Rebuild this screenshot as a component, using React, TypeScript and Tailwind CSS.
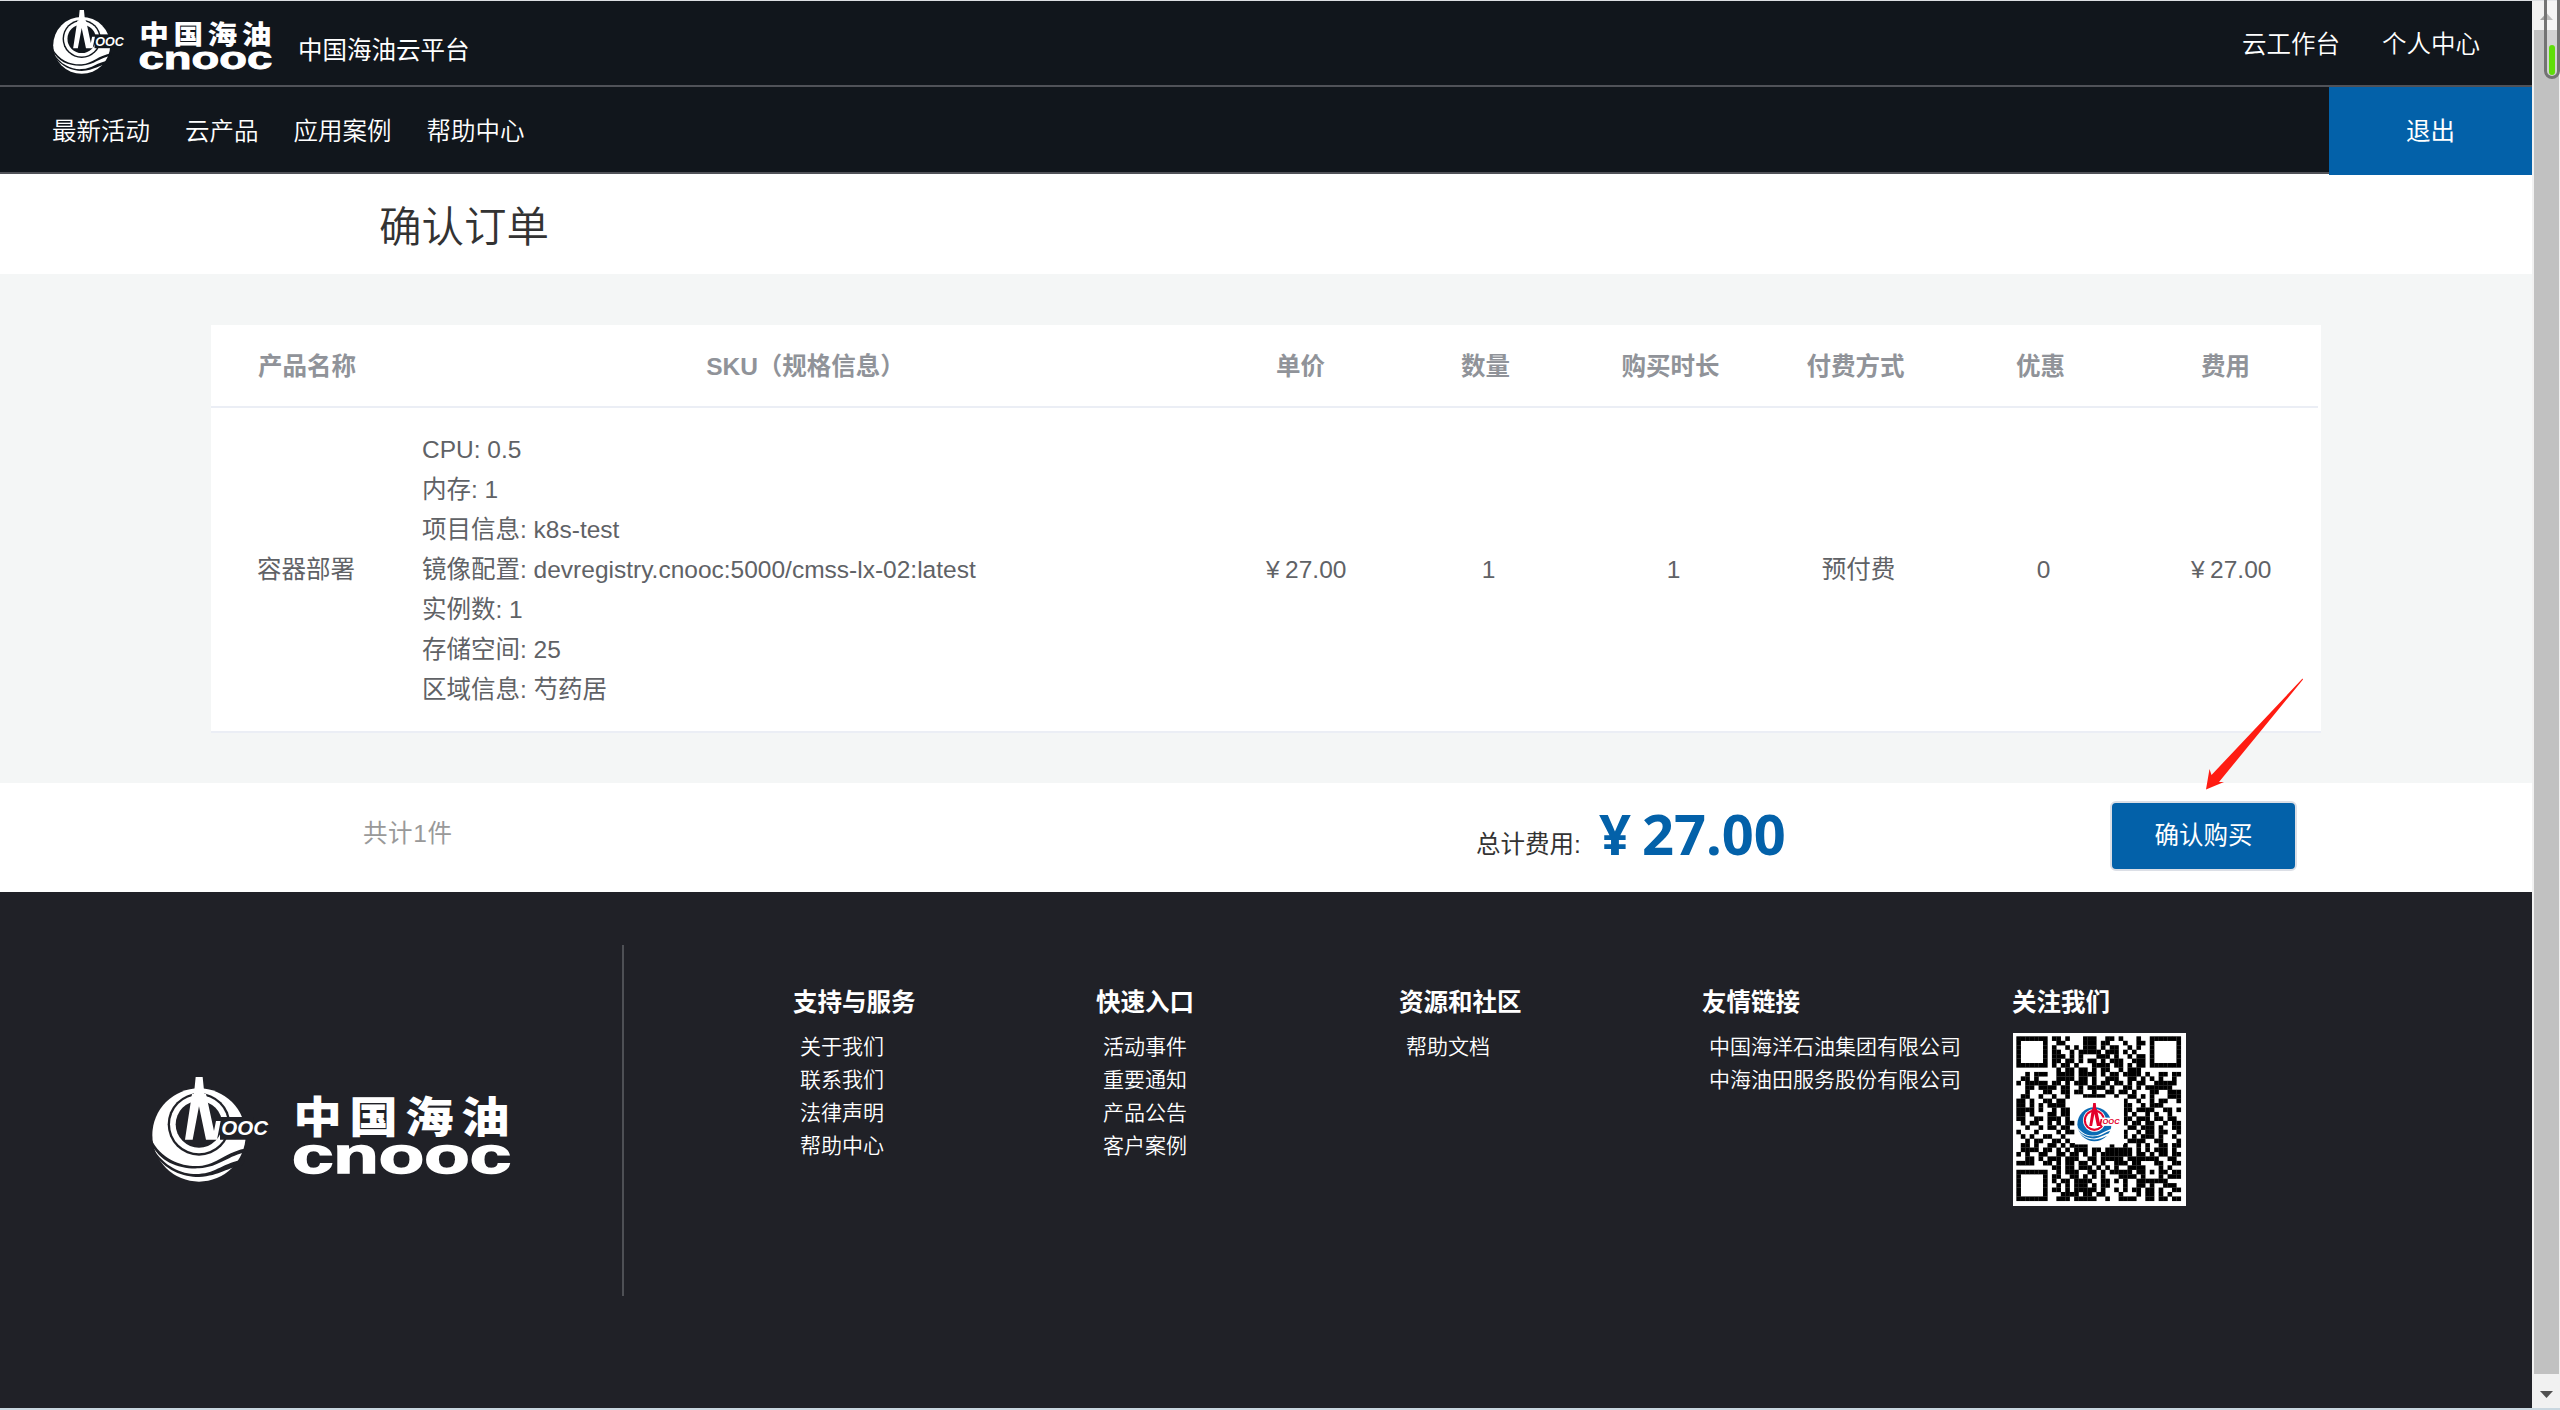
import React from "react";

const QR_ROWS = [
  "#######.##.#...###..##.#...#..#######",
  "#.....#..##....###.##...#..##.#.....#",
  "#.....#.#..#.#.###.#.##..#.#..#.....#",
  "#.....#.##..#.#####.###.#.#...#.....#",
  "#.....#.###.#.#...###.#..#.##.#.....#",
  "#.....#.##.##.#.##.#.###..###.#.....#",
  "#######.#.##.#...####.##.#.##.#######",
  ".........#.##.##.#.##..#.###.........",
  "..#.###..####.####.#.##.####.#..##.##",
  ".##.#....####.##.#..###..##.#.#.#..#.",
  "#.#####.##.#.###.#.##.##.#.##..#####.",
  "..##.####.##..#.####.#..##.#.######..",
  "..#...##..##.##..#..##.##.#...##..###",
  ".##..#..#..#...#####..#..##.#.#...###",
  "##.#..##.##.............#..#..#.##..#",
  "##.#.#.####.............##..#.###....",
  "####.#..#.##............##.####..##.#",
  "##.#...##.##............#.#..#.#..#..",
  "##..##.###.#............##.###.##.##.",
  ".#.##..#.#.##...........#.##.##..#.##",
  "..#..#.##.##.............##.###.#..##",
  "#...#....#.##...........#..#.##.##..#",
  ".#.#..##..#.............#.#.###.#..#.",
  "..#.##..##.#.............####..##...#",
  ".##.#..##.#.####.....#..#..#.#..##.##",
  ".####.##.#.#.###.##.######.#.#.###.#.",
  "#.#..##..##.##.#.#.#######.##.#.##.##",
  "..##.#.###.###..##.#####.#######..##.",
  "####..##.#.##.##.#.#..###.##...##..##",
  "........##.##.###.#.#.#..####...#.#..",
  "#######..#.###..##.#.#####.##.#.##.##",
  "#.....#.##..##.#.#.#...####.#...#.###",
  "#.....#.#.##.####..##.#.#..#######...",
  "#.....#..#.#.###.#.##...#..##.#..###.",
  "#.....#.##.#.#####.#..#.#.##.##.#..##",
  "#.....#...####.##.##...#...#.##.#.#..",
  "#######..###.#####..#..####..##.##.##",
];

function Emblem({ main, accent, ground }: { main: string; accent: string; ground: string }) {
  return (
    <g transform="scale(.3333) translate(-96 -78)">
      <circle cx="237" cy="252" r="140" className={main} />
      <circle cx="237" cy="220" r="94" className={ground} />
      <circle cx="237" cy="220" r="87" className={accent} />
      <circle cx="237" cy="220" r="70" className={ground} />
      <path d="M300 198H400V266H300Z" className={ground} />
      <path
        d="M92 262C125 330 190 348 237 345C290 342 320 300 385 291L382 303C325 312 300 348 237 352C180 355 120 335 92 275Z M97 290C135 350 190 372 237 369C290 366 310 335 375 325L368 343C325 348 300 375 237 378C190 378 135 360 97 300Z"
        className={ground}
      />
      <path d="M216 128L222 128L227 78H248L253 128H258L282 240L288 210H302L291 266H258L237 166L218 266H195Z" className={accent} />
      <text
        x="304"
        y="253"
        textLength="140"
        lengthAdjust="spacingAndGlyphs"
        fontSize="60"
        fontWeight="700"
        fontStyle="italic"
        fontFamily="Liberation Sans"
        className={accent}
      >
        OOC
      </text>
    </g>
  );
}

function Logo({ className, ground }: { className: string; ground: string }) {
  return (
    <svg viewBox="0 0 357 105" preserveAspectRatio="none" className={className}>
      <Emblem main="fill-white" accent="fill-white" ground={ground} />
      <text
        x="125 174.500 224 273.500"
        y="56.500"
        transform="scale(1.13 1)"
        fontSize="43"
        fontWeight="900"
        fontFamily="Noto Sans CJK SC"
        className="fill-white"
      >
        中国海油
      </text>
      <text
        x="140"
        y="96"
        textLength="219"
        lengthAdjust="spacingAndGlyphs"
        fontSize="52"
        fontWeight="700"
        fontFamily="Liberation Sans"
        stroke="white"
        strokeWidth="1.5"
        className="fill-white"
      >
        cnooc
      </text>
    </svg>
  );
}

function QrCode() {
  return (
    <svg viewBox="-0.75 -0.75 38.9 38.9" className="mt-[8px] ml-px block h-[173px] w-[173px] bg-white">
      {QR_ROWS.map((row, y) =>
        Array.from(row).map((cell, x) =>
          cell === "#" ? <rect key={`${x}-${y}`} x={x} y={y} width="1.04" height="1.04" /> : null,
        ),
      )}
      <rect x="13.2" y="13.8" width="11" height="10.5" fill="white" />
      <g transform="translate(13.7 15) scale(.082)">
        <Emblem main="fill-[#0b6ab3]" accent="fill-[#e4002b]" ground="fill-white" />
      </g>
    </svg>
  );
}

const NAV = ["最新活动", "云产品", "应用案例", "帮助中心"];
const HEADS = ["单价", "数量", "购买时长", "付费方式", "优惠", "费用"];
const SPECS = [
  "CPU: 0.5",
  "内存: 1",
  "项目信息: k8s-test",
  "镜像配置: devregistry.cnooc:5000/cmss-lx-02:latest",
  "实例数: 1",
  "存储空间: 25",
  "区域信息: 芍药居",
];

function Price() {
  return (
    <>
      <span className="inline-block w-[24.5px] text-center">¥</span>27.00
    </>
  );
}

const CELLS: React.ReactNode[] = [<Price />, "1", "1", "预付费", "0", <Price />];

const FOOTER = [
  { title: "支持与服务", width: "w-[303px]", items: ["关于我们", "联系我们", "法律声明", "帮助中心"] },
  { title: "快速入口", width: "w-[303px]", items: ["活动事件", "重要通知", "产品公告", "客户案例"] },
  { title: "资源和社区", width: "w-[303px]", items: ["帮助文档"] },
  { title: "友情链接", width: "w-[310px]", items: ["中国海洋石油集团有限公司", "中海油田服务股份有限公司"] },
];

function Scrollbar() {
  return (
    <div className="relative flex w-7 flex-col items-center bg-[#f1f1f1] pr-px pl-0.5">
      <svg viewBox="0 0 25 29" className="h-[29px] w-[25px]">
        <path d="M6 19L12.5 12L19 19Z" fill="#a3a3a3" />
      </svg>
      <div className="h-[1345px] w-[25px] bg-[#c1c1c1]" />
      <svg viewBox="0 0 25 34" className="h-[34px] w-[25px]">
        <path d="M6 17H19L12.5 24Z" fill="#505050" />
      </svg>
      <div className="absolute top-[-20px] right-0 h-[98px] w-4 rounded-full border-[3px] border-[#737373] bg-white/30">
        <div className="absolute bottom-px left-[2px] h-[30px] w-1.5 rounded-full bg-[#5fdd09]" />
      </div>
    </div>
  );
}

export default function App() {
  return (
    <div className="flex h-[1410px] w-[2560px] flex-col overflow-hidden font-['Liberation_Sans','Noto_Sans_CJK_SC',sans-serif] text-[24.5px]">
      <div className="h-px shrink-0 bg-[#dcdfe2]" />
      <div className="flex h-[1407px] shrink-0">
        <div className="w-[2532px]">
          <header className="flex h-[86px] items-start border-b-2 border-[#505258] bg-[#11161c] pl-[53px] text-white">
            <Logo className="mt-[9px] h-[64px] w-[218px] overflow-visible" ground="fill-[#11161c]" />
            <span className="mt-[32px] ml-[27px] leading-9">中国海油云平台</span>
            <div className="mt-[26px] mr-[52px] ml-auto flex gap-[42px] leading-9 font-[350]">
              <span>云工作台</span>
              <span>个人中心</span>
            </div>
          </header>
          <nav className="flex h-[87px] border-b-2 border-[#505258] bg-[#11161c] pl-[52px] text-white">
            <div className="flex gap-[35px] leading-[89px] font-[350]">
              {NAV.map((n) => (
                <span key={n}>{n}</span>
              ))}
            </div>
            <button className="ml-auto h-[88px] w-[203px] shrink-0 bg-[#0361a9] leading-[87px]">退出</button>
          </nav>
          <div className="h-[100px] pt-[23px] pl-[379px] text-[42.5px] leading-[62px] font-[350] text-[#333]">
            确认订单
          </div>

          <main className="h-[509px] bg-[#f4f6f6] pt-[51px] pl-[211px]">
            <div className="w-[2110px] bg-white">
              <div className="mr-[3px] flex h-[83px] items-center border-b-2 border-[#ebeef5] pt-[3px] text-center font-bold text-[#909399]">
                <div className="w-[192px]">产品名称</div>
                <div className="flex-1">SKU（规格信息）</div>
                {HEADS.map((h) => (
                  <div key={h} className="w-[185px]">
                    {h}
                  </div>
                ))}
              </div>
              <div className="flex h-[325px] items-center border-b-2 border-[#ebeef5] pt-px text-center text-[#606266]">
                <div className="w-[190px]">容器部署</div>
                <div className="flex-1 pl-[21px] text-left">
                  {SPECS.map((s) => (
                    <div key={s} className="h-10 leading-10">
                      {s}
                    </div>
                  ))}
                </div>
                {CELLS.map((c, i) => (
                  <div key={i} className="w-[185px]">
                    {c}
                  </div>
                ))}
              </div>
            </div>
          </main>

          <section className="relative flex h-[109px] items-start bg-white">
            <div className="mt-[33px] ml-[363px] w-[1113px] leading-9 tracking-[0.6px] text-[#999]">共计1件</div>
            <div className="mt-[44px] w-[113px] leading-9 whitespace-nowrap text-[#333]">总计费用:</div>
            <div className="mt-[13px] flex font-['Noto_Sans'] text-[56px] leading-[74px] font-bold text-[#0361a9]">
              <span className="w-[53px] pl-[10px]">¥</span>
              <span>27.00</span>
            </div>
            <button className="mt-[18px] mr-[235px] ml-auto h-[70px] w-[187px] rounded-md border-2 border-[#dcdfe6] bg-[#0361a9] text-white">
              确认购买
            </button>
            <svg viewBox="0 0 100 113" className="absolute top-[-105px] left-[2204px] h-[113px] w-[100px]">
              <path d="M98.500 0.500L99 1.500L15 104L20 104L2 111.500L5.500 91L7.500 97Z" fill="#ff1c12" />
            </svg>
          </section>

          <footer className="flex h-[516px] bg-[#202127] text-white">
            <div className="mt-[53px] h-[351px] w-[624px] border-r-2 border-[#4e5055] pt-[132px] pl-[152px]">
              <Logo className="h-[105px] w-[357px] overflow-visible" ground="fill-[#202127]" />
            </div>
            <div className="ml-[169px] flex pt-[93px]">
              {FOOTER.map((col) => (
                <div key={col.title} className={col.width}>
                  <div className="h-[45px] leading-9 font-bold">{col.title}</div>
                  {col.items.map((item) => (
                    <div key={item} className="h-[33px] pl-[7px] text-[21px] leading-[33px] font-[350]">
                      {item}
                    </div>
                  ))}
                </div>
              ))}
              <div>
                <div className="h-10 leading-9 font-bold">关注我们</div>
                <QrCode />
              </div>
            </div>
          </footer>
        </div>
        <Scrollbar />
      </div>
      <div className="h-0.5 shrink-0 bg-[#c9d7e0]" />
    </div>
  );
}
